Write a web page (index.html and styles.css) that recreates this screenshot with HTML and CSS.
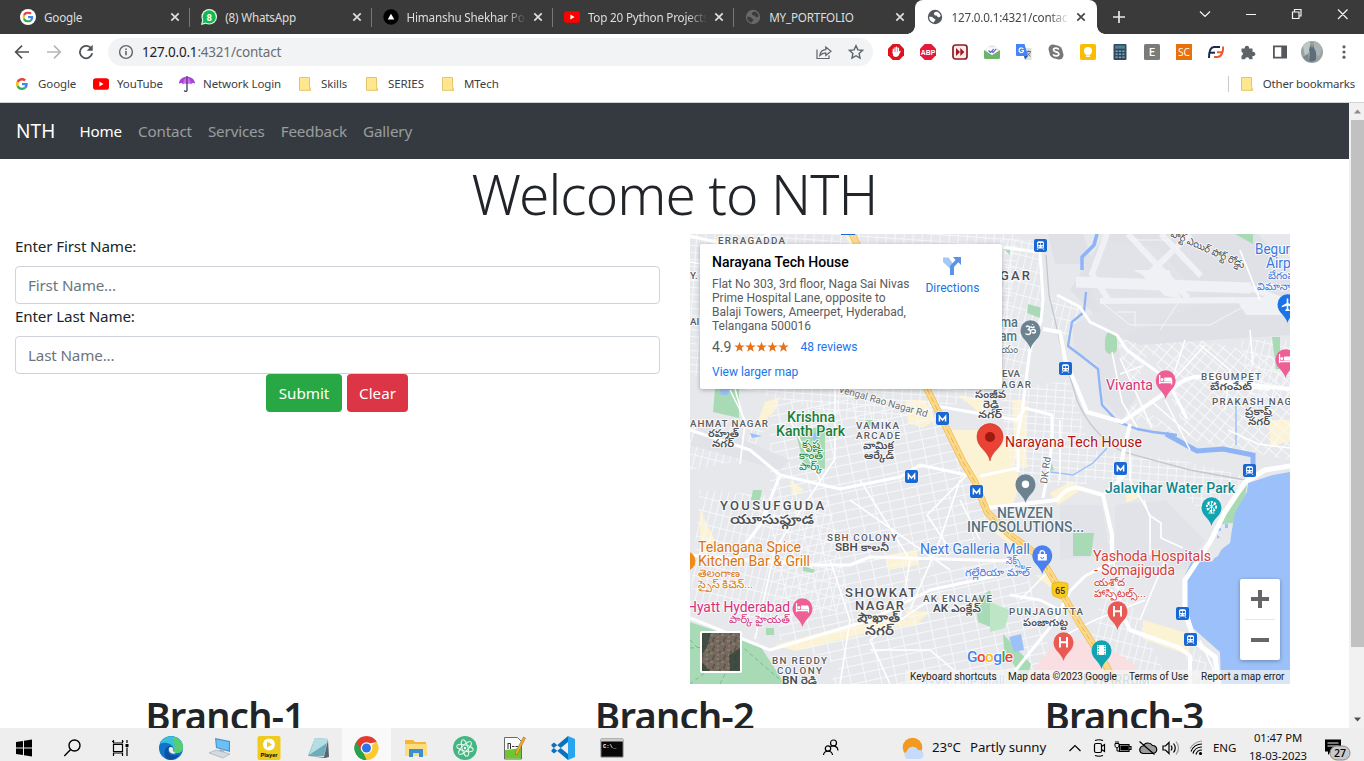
FILE: index.html
```html
<!DOCTYPE html>
<html lang="en">
<head>
<meta charset="utf-8">
<title>127.0.0.1:4321/contact</title>
<link rel="stylesheet" href="styles.css">
</head>
<body>
<svg class="defs" width="0" height="0">
  <defs>
    <symbol id="g-logo" viewBox="0 0 48 48">
      <path fill="#ea4335" d="M24 9.500c3.500 0 6.700 1.200 9.200 3.600l6.900-6.900C35.900 2.400 30.500 0 24 0 14.600 0 6.500 5.400 2.600 13.200l8 6.200C12.400 13.700 17.700 9.500 24 9.500z"/>
      <path fill="#4285f4" d="M47 24.500c0-1.600-.2-3.100-.4-4.500H24v9h12.900c-.6 3-2.200 5.500-4.800 7.200l7.700 6C44.400 38 47 31.800 47 24.500z"/>
      <path fill="#fbbc05" d="M10.500 28.600a14.500 14.500 0 0 1 0-9.200l-8-6.200a24 24 0 0 0 0 21.600z"/>
      <path fill="#34a853" d="M24 48c6.500 0 11.900-2.100 15.900-5.800l-7.700-6c-2.200 1.500-4.900 2.300-8.200 2.300-6.300 0-11.600-4.200-13.500-9.900l-8 6.200C6.500 42.600 14.600 48 24 48z"/>
    </symbol>
    <symbol id="yt" viewBox="0 0 16 16"><rect y="2.300" width="16" height="11.400" rx="2.800" fill="#f00"/><path d="M6.400 5.600v4.800l4.100-2.400z" fill="#fff"/></symbol>
    <symbol id="globe" viewBox="0 0 16 16"><circle cx="8" cy="8" r="7.200" fill="currentColor"/><path d="M2.200 7.800c2.200-.1 3.500.4 4.300 1.400.6.900 2 .4 2 1.600 0 1-1.300 1-1.600 2.600C3.800 13.200 2 10.500 2.200 7.800zM7 4.200c.7-1.300 2-1.700 3.200-1.500 2 .8 3.100 2.300 3.500 4.300-1 .7-1.500 1.700-2.700 1.200-.9-.5-.5-1.500-1.700-1.600C8 6.500 6.400 5.600 7 4.200z" fill="var(--cut)"/></symbol>
    <symbol id="x" viewBox="0 0 16 16"><path d="M4.300 4.300l7.400 7.400M11.700 4.300l-7.400 7.400" stroke="currentColor" stroke-width="1.700"/></symbol>
    <symbol id="folder" viewBox="0 0 16 16"><path d="M2.500 1.500h10v9l1.300 3.800H2.500z" fill="#ffe68f" stroke="#e5c468"/><path d="M11.500 14.300l1.500-4 1 4z" fill="#f3cf62"/></symbol>
    <symbol id="pin" viewBox="-11 -30 22 31"><path d="M0 0C-2-8-10-10-10-18.700A10 10 0 1 1 10-18.700C10-10 2-8 0 0z" fill="currentColor"/></symbol>
    <symbol id="bed" viewBox="0 0 14 14"><path d="M1 2v9M1 9.500h12v2M13 9.500V6.500" stroke="#fff" stroke-width="1.300" fill="none"/><path d="M5.500 4.500h6.500a1 1 0 0 1 1 1v3H5.500z" fill="#fff"/><circle cx="3.300" cy="6.500" r="1.500" fill="#fff"/></symbol>
    <symbol id="metro" viewBox="0 0 14 14"><rect width="14" height="14" rx="2.200" fill="#fff" opacity=".8"/><rect x=".5" y=".5" width="13" height="13" rx="2" fill="#1967d2"/><path d="M3.900 10V4.800L7 8.500l3.100-3.700V10" fill="none" stroke="#fff" stroke-width="1.500"/></symbol>
    <symbol id="train" viewBox="0 0 14 14"><rect x=".5" y=".5" width="13" height="13" rx="2" fill="#1967d2"/><rect x="3.600" y="2.700" width="6.800" height="7.300" rx="1.500" fill="#fff"/><path d="M4.700 4.500h2v2h-2zM7.400 4.500h2v2h-2z" fill="#1967d2"/><circle cx="5.300" cy="8.200" r=".7" fill="#1967d2"/><circle cx="8.700" cy="8.200" r=".7" fill="#1967d2"/><path d="M4.500 10l-1 1.400M9.500 10l1 1.400" stroke="#fff"/></symbol>
    <symbol id="star" viewBox="0 0 12 12"><path d="M6 .3l1.500 4h4.200L8.300 6.900l1.300 4.300L6 8.700l-3.600 2.500 1.300-4.300L.3 4.300h4.200z" fill="#e7711b"/></symbol>
  </defs>
</svg>

<header class="tabstrip">
  <div class="tab">
    <svg class="fav" viewBox="0 0 16 16"><circle cx="8" cy="8" r="8" fill="#fff"/><use href="#g-logo" x="2.500" y="2.500" width="11" height="11"/></svg>
    <span class="tab-title">Google</span><svg class="tab-x"><use href="#x"/></svg>
  </div>
  <div class="tab">
    <svg class="fav" viewBox="0 0 16 16"><circle cx="8.200" cy="7.800" r="7.800" fill="#e9f9ee"/><path d="M0 16l1.300-5 3.700 3.700z" fill="#e9f9ee"/><circle cx="8.200" cy="7.900" r="6.600" fill="#12b84a"/><path d="M1.500 14.500l1-3.500 2.500 2.500z" fill="#12b84a"/><text class="wa" x="8.200" y="11.500" text-anchor="middle">8</text></svg>
    <span class="tab-title">(8) WhatsApp</span><svg class="tab-x"><use href="#x"/></svg>
  </div>
  <div class="tab">
    <svg class="fav" viewBox="0 0 16 16"><circle cx="8" cy="8" r="7.700"/><path d="M8 4.800l3.300 5.600H4.700z" fill="#fff"/></svg>
    <span class="tab-title fade">Himanshu Shekhar Portfolio</span><svg class="tab-x"><use href="#x"/></svg>
  </div>
  <div class="tab">
    <svg class="fav"><use href="#yt"/></svg>
    <span class="tab-title fade">Top 20 Python Projects</span><svg class="tab-x"><use href="#x"/></svg>
  </div>
  <div class="tab last">
    <svg class="fav globe-dim"><use href="#globe"/></svg>
    <span class="tab-title">MY_PORTFOLIO</span><svg class="tab-x"><use href="#x"/></svg>
  </div>
  <div class="tab active">
    <svg class="fav globe-on"><use href="#globe"/></svg>
    <span class="tab-title fade">127.0.0.1:4321/contact</span><svg class="tab-x"><use href="#x"/></svg>
  </div>
  <svg class="plus" viewBox="0 0 14 14"><path d="M7 1v12M1 7h12" stroke="#e8e8e8" stroke-width="1.700"/></svg>
  <svg class="winctl" width="160" height="28" viewBox="0 0 160 28" fill="none" stroke="#f4f4f4" stroke-width="1.200">
    <path d="M1 11.500l5 5 5-5M47 14.500h10M93.500 12h6.500v6.500h-6.500zM95.500 12v-2.500h6.500v6.500h-2M139 9.500l9.500 9.500M148.500 9.500l-9.500 9.500"/>
  </svg>
</header>

<div class="toolbar">
  <div class="navbtns">
    <svg viewBox="0 0 16 16"><path d="M15 8H2M8 1.700L1.700 8 8 14.300" fill="none" stroke="#505357" stroke-width="1.700"/></svg>
    <svg viewBox="0 0 16 16"><path d="M1 8h13M8 1.700L14.300 8 8 14.300" fill="none" stroke="#b5b7ba" stroke-width="1.700"/></svg>
    <svg viewBox="0 0 16 16"><path d="M13.500 5A6.200 6.200 0 1 0 14.200 9.300" fill="none" stroke="#505357" stroke-width="1.800"/><path d="M14.700.8v6h-6z" fill="#505357"/></svg>
  </div>
  <div class="omnibox">
    <svg class="i16" viewBox="0 0 16 16"><circle cx="8" cy="8" r="6.400" fill="none" stroke="#5f6368" stroke-width="1.400"/><path d="M8 7v4.300M8 4.400v1.500" stroke="#5f6368" stroke-width="1.600"/></svg>
    <span class="url"><b>127.0.0.1</b>:4321/contact</span>
    <svg class="i16" viewBox="0 0 16 16" fill="none" stroke="#5f6368" stroke-width="1.200"><path d="M1 5.500v9h12v-3"/><path d="M3.800 11.500c.4-3.500 2.500-5.700 6-5.900V3l5.200 4.300-5.200 4.200V8.800c-2.500 0-4.300.8-6 2.700z"/></svg>
    <svg class="i16 star-btn" viewBox="0 0 16 16"><path d="M8 1.700l1.900 4.200 4.600.5-3.400 3.100.9 4.500-4-2.300L4 14l.9-4.500L1.500 6.400l4.600-.5z" fill="none" stroke="#5f6368" stroke-width="1.400"/></svg>
  </div>
  <div class="exts">
    <svg viewBox="0 0 16 16"><path d="M4.700 0h6.600L16 4.700v6.600L11.300 16H4.700L0 11.300V4.700z" fill="#dd1320"/><path d="M5.300 9V5.200M7 8V3.700M8.700 8V3.200M10.400 8V4.200" stroke="#fff" stroke-width="1.300" stroke-linecap="round"/><path d="M4.600 8h6.300l1-1.500.9.600-2.300 4.700c-.8 1.500-4.600 1.500-5.400 0z" fill="#fff"/></svg>
    <svg viewBox="0 0 16 16"><path d="M4.700 0h6.600L16 4.700v6.600L11.300 16H4.700L0 11.300V4.700z" fill="#e5193c"/><text class="abp" x="8" y="10.700" text-anchor="middle" textLength="14.500" lengthAdjust="spacingAndGlyphs">ABP</text></svg>
    <svg viewBox="0 0 16 16"><rect x="1" y="1" width="14" height="14" rx="2.500" fill="#fbeceb" stroke="#8e1c22" stroke-width="1.700"/><path d="M4 4l4 4-4 4zM8.300 4l4 4-4 4z" fill="#a01820"/></svg>
    <svg viewBox="0 0 16 16"><path d="M0 6l8 5 8-5v7.500a1.500 1.500 0 0 1-1.500 1.500h-13A1.500 1.500 0 0 1 0 13.500z" fill="#6db36b"/><path d="M.5 6L5 2l3-1 3 1 4.500 4-7.500 4.500z" fill="#dcefdd"/><path d="M3 3.500h10v4L8 10.500l-5-3z" fill="#fff"/><path d="M4.500 6.500l2 2 3.300-3.700M8 7.500l1 1 3.300-3.700" fill="none" stroke="#5955c4" stroke-width="1.100"/></svg>
    <svg viewBox="0 0 16 16"><path d="M7 4h8.500v12H9z" fill="#dfe2e5"/><path d="M0 0h8.500l3.500 12H1a1 1 0 0 1-1-1z" fill="#4285f4"/><path d="M8 12h4l-3 3.500z" fill="#1e55b4"/><path d="M7.300 5A2.300 2.300 0 1 0 7.300 7.500V6.500H5.500" stroke="#fff" fill="none" stroke-width="1.200"/><path d="M10.500 7.500h4.500M12.500 6.500v1M14.500 7.500c-.5 2-1.500 3-3 4M11.500 8.500c.5 1.500 1.500 3 3 3.800" stroke="#687076" fill="none"/></svg>
    <svg viewBox="0 0 16 16"><circle cx="5" cy="5" r="4.500" fill="#777"/><circle cx="11" cy="11" r="4.500" fill="#777"/><circle cx="8" cy="8" r="6.700" fill="#777"/><path d="M10.800 5.500C9.500 3.600 5.500 3.800 5.500 6c0 2.400 5.300 1.400 5.300 4 0 2.400-4.500 2.600-5.700.4" fill="none" stroke="#fff" stroke-width="1.700"/></svg>
    <svg viewBox="0 0 16 16"><rect width="16" height="16" rx="1.800" fill="#fbbc04"/><circle cx="8" cy="7" r="4" fill="#fff"/><path d="M6 9.500h4v3.500H6z" fill="#fff"/><path d="M6 11.300h4" stroke="#fbbc04" stroke-width=".6"/></svg>
    <svg viewBox="0 0 16 16"><rect x="1.500" y="0" width="13" height="16" rx="1" fill="#34495e"/><rect x="3" y="1.500" width="10" height="3.200" fill="#4b7f92"/><path d="M3.500 7.200h9M3.500 10.200h9M3.500 13.200h9" stroke="#7ba6c2" stroke-width="1.500" stroke-dasharray="2.200 1.200"/></svg>
    <svg viewBox="0 0 16 16"><rect width="16" height="16" rx="1.500" fill="#7b7b7b"/><text class="e" x="8" y="11.800" text-anchor="middle">E</text></svg>
    <svg viewBox="0 0 16 16"><rect width="16" height="16" fill="#e8710a"/><text class="sc" x="8" y="12" text-anchor="middle" textLength="12" lengthAdjust="spacingAndGlyphs">SC</text></svg>
    <svg viewBox="0 0 16 16" fill="none" stroke-width="2"><path d="M1 14c0-7 1.500-11 5-11h6" stroke="#192b4d"/><path d="M2 8.700h5" stroke="#192b4d"/><path d="M9 8.200h5.500M15 2.500c.5 6-2 10.500-5.500 10.500H6" stroke="#ef5a2a"/></svg>
    <svg viewBox="0 0 16 16"><path d="M1.500 4.500h3.300a2.200 2.200 0 1 1 4.200 0h3.500v3.300a2.200 2.200 0 1 1 0 4.200v3.300H9.300a2.100 2.100 0 0 0-4.200 0H1.500v-3.600a2.100 2.100 0 0 0 0-4z" fill="#5f6368"/></svg>
    <svg viewBox="0 0 16 16"><path d="M1 1.500h14v13H1zM2.800 3.300v9.400h6.500V3.300z" fill="#54575b" fill-rule="evenodd"/></svg>
    <svg class="avatar" viewBox="0 0 22 22"><circle cx="11" cy="11" r="11" fill="#98a2a2"/><path d="M2 5a11 11 0 0 1 7-5v10l-5 5z" fill="#bec8c5"/><path d="M13 0a11 11 0 0 1 8 8l-3 8-5-5z" fill="#a9b4b6"/><path d="M9 5c2-2 4-1 4 2l2 4v8c-3 2-6 2-7 1l1-8-1-3z" fill="#5f6d7a"/><path d="M2 16l5-3 1 8a11 11 0 0 1-6-5z" fill="#7b8788"/><circle cx="11" cy="5" r="1.600" fill="#9d8c86"/></svg>
    <svg viewBox="0 0 16 16"><circle cx="8" cy="2.800" r="1.600" fill="#5f6368"/><circle cx="8" cy="8" r="1.600" fill="#5f6368"/><circle cx="8" cy="13.200" r="1.600" fill="#5f6368"/></svg>
  </div>
</div>

<div class="bookmarks">
  <div class="bm b1"><svg class="i16" viewBox="0 0 16 16"><use href="#g-logo" x="2" y="2" width="12" height="12"/></svg><span>Google</span></div>
  <div class="bm b2"><svg class="i16"><use href="#yt"/></svg><span>YouTube</span></div>
  <div class="bm b3"><svg class="i16" viewBox="0 0 16 16"><path d="M0 7.800C0 3 4 .8 8 .8s8 2.200 8 7c-1-1.300-3-1.300-4 .5-1.500-1.300-2.500-1.300-4 0-1.500-1.300-2.500-1.300-4 0-1-1.800-3-1.800-4-.5z" fill="#a844d6"/><path d="M4 8.300C4.300 4 6 2 8 1c2 1 3.700 3 4 7.300-1.500-1.300-2.500-1.300-4 0-1.500-1.300-2.500-1.300-4 0z" fill="#d06af0"/><path d="M8 0v14c0 2-2.500 2-2.500.2" fill="none" stroke="#57456c" stroke-width="1.400"/></svg><span>Network Login</span></div>
  <div class="bm b4"><svg class="i16"><use href="#folder"/></svg><span>Skills</span></div>
  <div class="bm b5"><svg class="i16"><use href="#folder"/></svg><span>SERIES</span></div>
  <div class="bm b6"><svg class="i16"><use href="#folder"/></svg><span>MTech</span></div>
  <div class="bm other"><svg class="i16"><use href="#folder"/></svg><span>Other bookmarks</span></div>
</div>

<div class="viewport">
  <main class="page">
    <nav class="navbar">
      <a class="brand">NTH</a>
      <a class="on">Home</a><a>Contact</a><a>Services</a><a>Feedback</a><a>Gallery</a>
    </nav>
    <h1 class="welcome"><span>Welcome to NTH</span></h1>
    <div class="row">
      <form class="col">
        <label>Enter First Name:</label>
        <div class="control">First Name...</div>
        <label>Enter Last Name:</label>
        <div class="control">Last Name...</div>
        <div class="actions"><button class="btn ok" type="button">Submit</button><button class="btn no" type="button">Clear</button></div>
      </form>
      <div class="map">
        <svg class="canvas" width="600" height="450" viewBox="690 234 600 450">
          <defs>
            <pattern id="ga" width="9" height="7" patternUnits="userSpaceOnUse" patternTransform="rotate(4)"><path d="M0 .5h9M.5 0v7" stroke="#f7f8fa" stroke-width=".9"/></pattern>
            <pattern id="gb" width="7" height="13" patternUnits="userSpaceOnUse" patternTransform="rotate(14)"><path d="M0 .5h7M.5 0v13" stroke="#f7f8fa" stroke-width=".9"/></pattern>
            <pattern id="gc" width="15" height="9" patternUnits="userSpaceOnUse" patternTransform="rotate(-12)"><path d="M0 .5h15M.5 0v9" stroke="#f7f8fa" stroke-width="1"/></pattern>
            <pattern id="gd" width="10" height="8" patternUnits="userSpaceOnUse" patternTransform="rotate(40)"><path d="M0 .5h10M.5 0v8" stroke="#f7f8fa" stroke-width="1"/></pattern>
            <pattern id="sat" width="11" height="9" patternUnits="userSpaceOnUse"><path d="M1 1h3v2H1zM6 4h3v2H6zM2 6h2v2H2z" fill="#8f8378"/><path d="M4 3h2v2H4zM8 0h2v3H8zM9 7h2v2H9z" fill="#54503f"/></pattern>
          </defs>
          <path fill="#e6e8ec" d="M690 234h600v450H690z"/>
          <!-- commercial blocks -->
          <g fill="#fcf2d4"><path d="M765 402l15-5-5 14-20 18zM845 235l8 0 14 20-15-2zM905 400h20l10 20-12 8-15-5zM958 395l28 5v20l-12-12zM950 430h30l38 20-5 18-45 8-12-20zM968 476l50-8v20l-5 18-30 3zM1012 400l14 0 1 68h-9l-4-30zM1270 420h20v20l-20 8zM790 480l14 10-12 6zM885 555l32-5 2 15-30 5zM775 645l110-30 40 8-50 8-80 20zM700 510l15 30-15 25zM1143 620l50 15-5 20-45-16zM1050 493l22-12 10 8-24 16zM1125 490l18-2-5 10-12 5zM905 610l25 2-18 15zM1035 575l15 0 12 16-12-4zM1000 520l35 32-10 3-30-22z"/></g>
          <!-- street grids -->
          <path fill="url(#ga)" d="M690 234h330l-20 160-130 30-180-50z"/>
          <path fill="url(#gb)" d="M690 420l75 10-20 30-55 10zM700 490l130 10 20 110-90 10-70-20z"/>
          <path fill="url(#gc)" d="M770 400h170l50 130-80 50-60 90-70-30-10-100zM880 590l140-40 40 134H830z"/>
          <path fill="url(#gd)" d="M1120 340h80l90 20v100l-100-20-80-30zM1130 400l60 40-40-90z"/>
          <path fill="url(#ga)" d="M1000 390l70-10 20 70 90 10 80 20-60 30-20-20-70-4-10-8-30 12-60-20z"/>
          <path fill="url(#gb)" d="M1000 240h40v90l-20 60-20-10zM1050 297l30 10-8 30-20-4zM1110 560l60 124h-90zM1190 640l30 44h-40zM1240 340h50v60h-40z"/>
          <!-- campus and airport ground -->
          <path fill="#dfe1e6" d="M1048 234h35l10 30h-38zM1105 234h153l32 36v65l-80 5-70 5-25-10-45-45z"/>
          <path fill="#e1e3e8" d="M1092 262l15-20 50 5 50 55-90 35-25-40zM1072 325l30-15 10 25 25 60-15 25-20-20-4-35-24-15zM700 420l90 40-10 10-90-25zM1115 505l50-5 40 40-20 30-70-5zM1060 505l42 0 8 50-50 5z"/>
          <path fill="none" stroke="#f0f1f4" stroke-width="11" d="M1076 282l175 6"/>
          <path fill="none" stroke="#f0f1f4" stroke-width="6" d="M1100 301l190-1M1128 234l60 64M1161 234l40 42M1250 288l40 15M1107 234l-15 40 18 28M1190 234l-45 44"/>
          <path fill="#f0f1f4" d="M1238 302h52v13h-44zM1133 270h36l12 28-16-2-20-20z"/>
          <path fill="none" stroke="#f4f5f7" stroke-width="1" d="M1100 301l30 24h80l40-22M1117 312h18v14M1180 300l-20 30M1130 240h40l30 34"/>
          <path d="M1030 675l30-40 45 10 30 20 10 19H1030z" fill="#fadfe2"/>
          <!-- parks -->
          <g fill="#a8dab5"><path d="M715 389h24v29l-26-6zM795 430l30-3v42h-20zM1028 304l14 4-2 10-13-5zM1105 341a6 10 0 0 1 12 0v8a6 6 0 0 1-12-2zM1235 234h18v10zM1272 337h8v32h-4zM1073 533h21l-3 23h-18zM690 622l70 24 25 38h-95zM975 600l15-10 8 40-20-8zM803 566l12 4-2 3-10-2zM753 490l9 0-2 10-9 0zM766 628l8 0 0 7-8 0zM1235 500l12-15-3 20-15 35-10-14zM1003 634l28 30-5 20-22-35zM865 420l8 0-3 7zM1051 462l3 8-4 1zM1002 247h8v8z"/></g>
          <path fill="#bde6c6" d="M990 602l20 8-5 18-15 4z"/>
          <path d="M690 648l50-3 45 39M690 640l25 25-25 19M720 684l18-38" fill="none" stroke="#6fb184" stroke-width=".8" stroke-dasharray="4 3"/>
          <!-- water -->
          <path fill="#9cc0f9" d="M1290 472l-17 3-25 8-1 9-12 21-3 17-14 26-10 6-15-4-8 17v27l8 26 10 9 17 15 1 32h69z"/>
          <path fill="#e6e8ec" d="M1213 525l20-2-3 20-12 9-6 10-10-9z"/>
          <path fill="#9cc0f9" d="M720 389h10l-2 6h-7zM1218 528h3v3h-3zM1225 524h3v4h-3zM1217 535l3 2-3 2zM1009 637l12-3 3 16-10 2zM808 434l12-2-3 10zM750 433l12 3-10 2z"/>
          <path d="M1097 234l-3 11-12 12v13" fill="none" stroke="#8fb4f5" stroke-width="3.500"/>
          <path d="M1086 292l-2 20-12 10-4 24 12 9 18 14 2 20 2 16 16 17 19 7 16 3 24 3" fill="none" stroke="#8fb4f5" stroke-width="2.300" stroke-linejoin="round"/>
          <path d="M1166 434l31 17 26-2 30 6v15" fill="none" stroke="#8fb4f5" stroke-width="5"/>
          <path d="M1236 400v45M1107 448l-14 15-20 12-23-3" fill="none" stroke="#9cc0f9" stroke-width="1.400"/>
          <!-- railway -->
          <path d="M1046 255l3 40 13 55 15 50q14 34 46 52l67 18 55 10" fill="none" stroke="#c4c7cc" stroke-width="1.300"/>
          <!-- local roads -->
          <g fill="none" stroke="#fff" stroke-width="1.600">
            <path d="M690 262l60 10M745 420l-15-30M735 389l10 35-5 40M835 389v70l-60 90-20 90M790 420l30 60M960 480l-20 60-30 70M860 480l50 80-10 60M850 500l100 70M830 560l20 60-10 64M1112 352l10 50 15 25M1120 358l32 70M1142 366l-22 8M1185 340l-18 55M1200 345l30 25-5 40M1165 400l25 50M1150 400l40 35M1205 345l-45 50M1060 420v60M1130 440v40l20 35v40M1144 500l5 15 12 8v15l22 10M1020 600l30-30M930 600l-60 40 20 44M870 650h60l40 34M1055 640l40-20 50-20M1120 600l-10-60M1165 560l-25 60M1200 640l20 44M1270 390l-45-5M1250 330l3 35M1228 430l30 14 32 4M1024 440h30M967 475l-40 40 20 30M960 500l20 40M1240 250l20 50"/>
          </g>
          <!-- main roads -->
          <g fill="none" stroke="#fff" stroke-width="3" stroke-linejoin="round">
            <path d="M690 236l50 12 30-14M1000 247l38 5M1040 252l3 47-2 22-11 28-8 63-4 23v37" />
            <path d="M1043 329l17 3 5 27 22 53 35 10 55-37q13-10 26-8l20 5 67 7M1130 424l-7 30-5 30" stroke-width="4"/>
            <path d="M1057 295l23 12 10 15 27 13 10 15 40 29 20 40M930 405l87 15 8-12 27 7v22l-2 25-7 36"/>
            <path d="M987 508l70-8q10-14 22-12l24 7 9 40v20" stroke-width="4"/>
            <path d="M690 430l60 20 30 25 60 14 60-12 20-12 47 10M980 476l38-8M1103 495l22-20"/>
            <path d="M780 475l-20 50-30 40M690 555l120 10 40 0 20-8 143 4"/>
            <path d="M690 618l80 32 100-30 60-30 70-15"/>
            <path d="M1125 556l-40 20-15 15-15 30-40 50M1010 595l30 5 20 10" />
            <path d="M1110 590l20 40 50 18 10 8v28" stroke-width="4"/>
          </g>
          <path d="M1290 466l-25 4-20 12-20 30-15 30-25 38v32l10 30 20 15 4 27" fill="none" stroke="#fff" stroke-width="5"/>
          <!-- highway -->
          <path d="M852 234l20 40 55 115 15 30 21 43 12 20 12 30 23 23 30 22 20 33 20 34 23 36 14 26" fill="none" stroke="#f2bb4c" stroke-width="7"/>
          <path d="M852 234l20 40 55 115 15 30 21 43 12 20 12 30 23 23 30 22 20 33 20 34 23 36 14 26" fill="none" stroke="#fbd98c" stroke-width="5.500"/>
          <path d="M927 389l15 30 21 43 12 20 12 30 23 23 30 22 20 33 20 34 23 36" fill="none" stroke="#eea92e" stroke-width=".8" stroke-dasharray="6 3"/>

          <g class="lbl poi blue under"><text x="925" y="686" textLength="80" lengthAdjust="spacingAndGlyphs">GVK One Mall</text></g>
          <text class="lbl poi teal under" x="1083" y="685" textLength="67" lengthAdjust="spacingAndGlyphs">PVR IRRUM</text>

          <g class="lbl area">
            <text x="718" y="244" textLength="67">ERRAGADDA</text>
            <text x="690" y="427" textLength="78">AHMAT NAGAR</text>
            <text x="856" y="429" textLength="43">VAMIKA</text><text x="856" y="439" textLength="44">ARCADE</text>
            <text x="827" y="541" textLength="70">SBH COLONY</text>
            <text x="923" y="602" textLength="69">AK ENCLAVE</text>
            <text x="1009" y="615" textLength="74">PUNJAGUTTA</text>
            <text x="1201" y="380" textLength="60">BEGUMPET</text>
            <text x="1212" y="405" textLength="87">PRAKASH NAGA</text>
            <text x="772" y="664" textLength="55">BN REDDY</text><text x="777" y="674" textLength="45">COLONY</text>
            <text x="1002" y="377" textLength="18">EVA</text><text x="1001" y="388" textLength="30">AGAR</text>
            <text x="690" y="279">Y.</text><text x="690" y="325">AI</text>
          </g>
          <g class="lbl te">
            <text x="708" y="437" textLength="31" lengthAdjust="spacingAndGlyphs">రహ్మత్</text><text x="712" y="447" textLength="22" lengthAdjust="spacingAndGlyphs">నగర్</text>
            <text x="863" y="449" textLength="31" lengthAdjust="spacingAndGlyphs">వామిక</text><text x="864" y="459" textLength="30" lengthAdjust="spacingAndGlyphs">ఆర్కేడ్</text>
            <text x="835" y="551" textLength="54" lengthAdjust="spacingAndGlyphs">SBH కాలనీ</text>
            <text x="933" y="612" textLength="48" lengthAdjust="spacingAndGlyphs">AK ఎంక్లేవ్</text>
            <text x="1023" y="626" textLength="45" lengthAdjust="spacingAndGlyphs">పంజాగుట్ట</text>
            <text x="1210" y="390" textLength="42" lengthAdjust="spacingAndGlyphs">బేగంపేట్</text>
            <text x="1245" y="415" textLength="27" lengthAdjust="spacingAndGlyphs">ప్రకాష్</text><text x="1248" y="425" textLength="22" lengthAdjust="spacingAndGlyphs">నగర్</text>
            <text x="782" y="684" textLength="35" lengthAdjust="spacingAndGlyphs">BN రెడ్డి</text>
            <text x="975" y="398" textLength="31" lengthAdjust="spacingAndGlyphs">సంజీవ</text><text x="983" y="408" textLength="16" lengthAdjust="spacingAndGlyphs">రెడ్డి</text><text x="978" y="418" textLength="24" lengthAdjust="spacingAndGlyphs">నగర్</text>
          </g>
          <g class="lbl town">
            <text x="720" y="510" textLength="104">YOUSUFGUDA</text>
            <text x="845" y="597" textLength="71">SHOWKAT</text><text x="855" y="610" textLength="49">NAGAR</text>
            <text x="1000" y="280" textLength="30">GAR</text>
            <text class="tt" x="730" y="524" textLength="84" lengthAdjust="spacingAndGlyphs">యూసుఫ్గూడ</text>
            <text class="tt" x="857" y="622" textLength="43" lengthAdjust="spacingAndGlyphs">షౌఖాత్</text><text class="tt" x="865" y="635" textLength="29" lengthAdjust="spacingAndGlyphs">నగర్</text>
          </g>
          <g class="lbl road">
            <text transform="translate(838 392) rotate(16)" textLength="92" lengthAdjust="spacingAndGlyphs">Vengal Rao Nagar Rd</text>
            <text transform="translate(1047 484) rotate(-82)" textLength="27" lengthAdjust="spacingAndGlyphs">DK Rd</text>
            <text class="dark" transform="translate(1170 236) rotate(24)" textLength="80" lengthAdjust="spacingAndGlyphs">పోర్ట్ ఎయిర్ పోర్ట్ రోడ్డు</text>
          </g>
          <g class="lbl poi green"><text x="787" y="422" textLength="48" lengthAdjust="spacingAndGlyphs">Krishna</text><text x="776" y="436" textLength="69" lengthAdjust="spacingAndGlyphs">Kanth Park</text>
            <g class="small"><text x="802" y="448" textLength="18" lengthAdjust="spacingAndGlyphs">కృష్ణ</text><text x="799" y="459" textLength="24" lengthAdjust="spacingAndGlyphs">కాంత్</text><text x="799" y="470" textLength="23" lengthAdjust="spacingAndGlyphs">పార్క్</text></g></g>
          <g class="lbl poi orange"><text x="698" y="552" textLength="103" lengthAdjust="spacingAndGlyphs">Telangana Spice</text><text x="698" y="566" textLength="112" lengthAdjust="spacingAndGlyphs">Kitchen Bar &amp; Grill</text>
            <g class="small"><text x="698" y="577" textLength="42" lengthAdjust="spacingAndGlyphs">తెలంగాణ</text><text x="698" y="588" textLength="55" lengthAdjust="spacingAndGlyphs">స్పైస్ కిచెన్...</text></g></g>
          <g class="lbl poi pink"><text x="687" y="612" textLength="103" lengthAdjust="spacingAndGlyphs">Hyatt Hyderabad</text><text class="small" x="729" y="623" textLength="61" lengthAdjust="spacingAndGlyphs">పార్క్ హైయత్</text><text x="1106" y="390" textLength="47" lengthAdjust="spacingAndGlyphs">Vivanta</text></g>
          <g class="lbl poi blue"><text x="920" y="554" textLength="110" lengthAdjust="spacingAndGlyphs">Next Galleria Mall</text>
            <g class="small"><text x="1006" y="564" textLength="19" lengthAdjust="spacingAndGlyphs">నెక్స్ట్</text><text x="965" y="576" textLength="65" lengthAdjust="spacingAndGlyphs">గల్లేరియా మాల్</text><text x="1268" y="279" textLength="27" lengthAdjust="spacingAndGlyphs">బేగంప</text><text x="1257" y="290" textLength="40" lengthAdjust="spacingAndGlyphs">విమానాశ్ర</text></g>
            <text x="1255" y="254" textLength="50" lengthAdjust="spacingAndGlyphs">Begump</text><text x="1266" y="268" textLength="42" lengthAdjust="spacingAndGlyphs">Airport</text></g>
          <g class="lbl poi slate"><text x="997" y="518" textLength="56" lengthAdjust="spacingAndGlyphs">NEWZEN</text><text x="967" y="532" textLength="117" lengthAdjust="spacingAndGlyphs">INFOSOLUTIONS...</text><text x="1000" y="327" textLength="18" lengthAdjust="spacingAndGlyphs">ma</text><text x="1000" y="341" textLength="17" lengthAdjust="spacingAndGlyphs">am</text><text class="small" x="1001" y="353" textLength="17" lengthAdjust="spacingAndGlyphs">యం</text></g>
          <g class="lbl poi teal"><text x="1105" y="493" textLength="130" lengthAdjust="spacingAndGlyphs">Jalavihar Water Park</text></g>
          <g class="lbl poi red"><text x="1093" y="561" textLength="118" lengthAdjust="spacingAndGlyphs">Yashoda Hospitals</text><text x="1094" y="575" textLength="81" lengthAdjust="spacingAndGlyphs">- Somajiguda</text>
            <g class="small"><text x="1094" y="586" textLength="31" lengthAdjust="spacingAndGlyphs">యశోద</text><text x="1094" y="597" textLength="52" lengthAdjust="spacingAndGlyphs">హాస్పిటల్స్...</text></g></g>
          <g class="lbl poi dark-red"><text x="1005" y="447" textLength="137" lengthAdjust="spacingAndGlyphs">Narayana Tech House</text></g>

          <g>
            <use href="#metro" x="935.500" y="411.500" width="14" height="14"/><use href="#metro" x="904.500" y="469.500" width="14" height="14"/><use href="#metro" x="969.500" y="484.500" width="14" height="14"/><use href="#metro" x="1113.500" y="461.500" width="14" height="14"/>
            <use href="#train" x="1033.500" y="238.500" width="14" height="14"/><use href="#train" x="1058.500" y="361.500" width="14" height="14"/><use href="#train" x="1242.500" y="463.500" width="14" height="14"/><use href="#train" x="1175.500" y="606.500" width="14" height="14"/><use href="#train" x="1183.500" y="632.500" width="14" height="14"/>
            <path d="M841 234h14v1h-14z" fill="#1967d2"/>
            <path d="M1053 583l7-1 7 1q1.500 0 1 6 0 6-1.500 7l-6.500 2.500-6.500-2.500q-1.500-1-1.500-7-.5-6 1-6z" fill="#f9cb1c" stroke="#dba90a" stroke-width=".6"/><text class="hwno" x="1060" y="593.500" text-anchor="middle">65</text>
          </g>
          <circle cx="686" cy="561" r="9.500" fill="#ee8b1b"/>
          <g transform="translate(1165.700 399)" color="#ee6095"><use href="#pin" x="-11" y="-30" width="22" height="31"/><use href="#bed" x="-7" y="-26" width="14" height="14"/></g>
          <g transform="translate(1285.500 378)" color="#ee6095"><use href="#pin" x="-11" y="-30" width="22" height="31"/><use href="#bed" x="-7" y="-26" width="14" height="14"/></g>
          <g transform="translate(802.500 627)" color="#ee6095"><use href="#pin" x="-11" y="-30" width="22" height="31"/><use href="#bed" x="-7" y="-26" width="14" height="14"/></g>
          <g transform="translate(1287.500 323)" color="#1a73e8"><use href="#pin" x="-11" y="-30" width="22" height="31"/><path d="M-.8-24.500h1.600v4.500l5 3v1.300l-5-1.500v3l1.400 1.200v1h-4.400v-1l1.400-1.200v-3l-5 1.500V-17l5-3z" fill="#fff"/></g>
          <g transform="translate(1030.500 349)" color="#6b8390"><use href="#pin" x="-11" y="-30" width="22" height="31"/><path d="M-4.500-22c2-2 5 0 2.500 2.500 3 .5 3 5-.5 5-2 0-2.500-1-2.500-1M0-18.500c3-2 5-1 5 1s-3 2-3 .5M0-22.500c1 1.500 3 1.500 4 0M2-24.700v.8" fill="none" stroke="#fff" stroke-width="1.400"/></g>
          <g transform="translate(1025.500 503)" color="#6b8390"><use href="#pin" x="-11" y="-30" width="22" height="31"/><circle cy="-18.700" r="3.700" fill="#fff"/></g>
          <g transform="translate(1042.300 574)" color="#4a80f0"><use href="#pin" x="-11" y="-30" width="22" height="31"/><path d="M-4.500-20h9v6.500h-9z" fill="#fff"/><path d="M-2.300-20v-1a2.300 2.300 0 0 1 4.600 0v1" fill="none" stroke="#fff" stroke-width="1.300"/><path d="M-1.500-17a1.500 1.500 0 0 0 3 0" fill="none" stroke="#4a80f0"/></g>
          <g transform="translate(1211.500 526)" color="#12a4b0"><use href="#pin" x="-11" y="-30" width="22" height="31"/><circle cy="-19.500" r="4.600" fill="none" stroke="#fff" stroke-width="2" stroke-dasharray="2.200 1.200"/><path d="M0-20v7M0-20l-4-2M0-20l4-2M0-20v-4M0-20l-3 3.500M0-20l3 3.500M-3-13h6" stroke="#fff"/></g>
          <g transform="translate(1117.500 630)" color="#ea5a55"><use href="#pin" x="-11" y="-30" width="22" height="31"/><path d="M-3.500-24v10.500M3.500-24v10.500M-3.500-18.700h7" stroke="#fff" stroke-width="1.900"/></g>
          <g transform="translate(1063.500 661)" color="#ea5a55"><use href="#pin" x="-11" y="-30" width="22" height="31"/><path d="M-3.500-24v10.500M3.500-24v10.500M-3.500-18.700h7" stroke="#fff" stroke-width="1.900"/></g>
          <g transform="translate(1101.500 669)" color="#12a4b0"><use href="#pin" x="-11" y="-30" width="22" height="31"/><path d="M-4.500-24h9v10h-9z" fill="#fff"/><path d="M-3.300-23.500v9.500M3.300-23.500v9.500" stroke="#12a4b0" stroke-width="1.200" stroke-dasharray="1.400 1.200"/></g>
          <g transform="translate(990 461)"><path d="M0 0C-2-11-13-13-13-24.500A13 13 0 1 1 13-24.500C13-13 2-11 0 0z" fill="#ea4335" stroke="#c5372b" stroke-width=".6"/><circle cy="-24" r="5" fill="#9c1a12"/></g>

          <rect x="700" y="631" width="42" height="42" rx="2" fill="#fff"/><path d="M702 633h38v38h-38z" fill="#75695f"/><path d="M702 633h38v38h-38z" fill="url(#sat)" opacity=".7"/><path d="M702 633h9l-4 14-5 8zM729 655l11-7v23h-10zM702 662l8 9h-8z" fill="#33443a" opacity=".8"/>
          <text class="glogo" x="967" y="662" textLength="46"><tspan fill="#4285f4">G</tspan><tspan fill="#ea4335">o</tspan><tspan fill="#fbbc05">o</tspan><tspan fill="#4285f4">g</tspan><tspan fill="#34a853">l</tspan><tspan fill="#ea4335">e</tspan></text>
        </svg>
        <section class="card">
          <div class="card-main">
            <h2>Narayana Tech House</h2>
            <p>Flat No 303, 3rd floor, Naga Sai Nivas<br>Prime Hospital Lane, opposite to<br>Balaji Towers, Ameerpet, Hyderabad,<br>Telangana 500016</p>
            <div class="rating"><span>4.9</span><svg width="55" height="12"><use href="#star" width="11" height="12"/><use href="#star" x="11" width="11" height="12"/><use href="#star" x="22" width="11" height="12"/><use href="#star" x="33" width="11" height="12"/><use href="#star" x="44" width="11" height="12"/></svg><a>48 reviews</a></div>
            <a class="larger">View larger map</a>
          </div>
          <div class="dir">
            <svg width="22" height="22" viewBox="0 0 22 22"><path d="M2 3.500l3 .5 6.500 8.500V20H9v-6.500L2.500 7z" fill="#a6c8f5"/><path d="M2 2.500h5.500L12 8.700 8.500 13 2 7z" fill="#a6c8f5"/><path d="M12 2h8v8l-2.700-2.700L13 12v8H9v-9l5.500-6z" fill="#5a94ea"/></svg>
            <a>Directions</a>
          </div>
        </section>
        <div class="zoomctl"><svg width="40" height="81" viewBox="0 0 40 81"><path d="M11 20h18M20 11v18M11 61h18" stroke="#666" stroke-width="4"/><path d="M5 40.500h30" stroke="#e6e6e6"/></svg></div>
        <div class="attrib"><span class="a1">Keyboard shortcuts</span><span class="a2">Map data ©2023 Google</span><span class="a3">Terms of Use</span><span class="a4">Report a map error</span></div>
      </div>
    </div>
    <div class="branches"><h2>Branch-1</h2><h2>Branch-2</h2><h2>Branch-3</h2></div>
  </main>
  <div class="scrollbar">
    <svg width="15" height="17" viewBox="0 0 15 17"><path d="M5 10.500h7l-3.500-4z" fill="#8a8a8a"/></svg>
    <div class="thumb"></div>
    <svg width="15" height="17" viewBox="0 0 15 17"><path d="M5 6.500h7l-3.500 4z" fill="#505050"/></svg>
  </div>
</div>

<footer class="taskbar">
  <div class="sys">
    <svg viewBox="0 0 24 24"><path d="M4 6l7-1v6.500H4zM12 4.800l8-1.300v8h-8zM4 12.500h7V19l-7-1zM12 12.500h8v8l-8-1.300z"/></svg>
    <svg viewBox="0 0 24 24"><circle cx="14.500" cy="9.500" r="5.500" fill="none" stroke="#000" stroke-width="1.400"/><path d="M10.600 13.500L4.300 20" stroke="#000" stroke-width="1.400"/></svg>
    <svg viewBox="0 0 24 24" fill="none" stroke="#000" stroke-width="1.200"><path d="M5.500 8.500h9v7h-9zM4 5.500h2M14 5.500h1.500M5.500 4v3h9V4M5.500 20v-3h9v3M19 4v3M19 11.500V20"/><path d="M17.500 8h3v3h-3z" fill="#000" stroke="none"/></svg>
  </div>
  <div class="apps">
    <svg viewBox="0 0 24 24"><circle cx="12" cy="12" r="12" fill="#1274c9"/><path d="M1 8C4 1 11-1 17 1c5 2 7 6 7 10 0 4-3 6-6 6s-4-1-3.500-3C15 8 6 5 1 8z" fill="#39c1d7"/><path d="M14 1c7 1 10 6 10 10 0 4-3 6-6 6-3-.2-4-1-3.500-3 3-3 0-9-1-13z" fill="#56cd70"/><path d="M9 14c0 5 6 7 12 4-3 5-8 7-13 5-4-4-3-11 2-13 3 0 4 1 4 2-1-2-5-1-5 2z" fill="#104f9a"/><path d="M10 12c1-2 4-1 4 .5 0 1.500-1 3 3 4.500-4 2-8-1-7-5z" fill="#eee"/></svg>
    <svg viewBox="0 0 24 24"><path d="M7 2l15 3v11L8 12z" fill="#4a93c8"/><path d="M8.300 3.500l12.500 2.600v8.400L9 11.300z" fill="#6cc0f7"/><path d="M1 17l7-3 14 4-7 4z" fill="#d3dae0" stroke="#9ba6ae" stroke-width=".6"/><path d="M12 13l5 1-1 2-5-1z" fill="#a9b4bb"/></svg>
    <svg viewBox="0 0 24 24"><rect x=".5" width="23" height="24" rx="2" fill="#eecb1c"/><circle cx="12" cy="8.500" r="6" fill="#fff"/><path d="M10 5.500v6l5-3z" fill="#eecb1c"/><text class="pl" x="12" y="21" text-anchor="middle" textLength="17" lengthAdjust="spacingAndGlyphs">Player</text></svg>
    <svg viewBox="0 0 24 24"><path d="M9 2l13 1-4 17H2z" fill="#6cadbd"/><path d="M9 2l13 1-1 4L6 17l-3 2z" fill="#b4dde4"/><path d="M2 20l16 1 4-17 1 17-4 1z" fill="#5a646a"/></svg>
    <svg class="cur" viewBox="-12.500 -8 49 33" preserveAspectRatio="xMidYMin meet"><path d="M12 12L1.600 6A12 12 0 0 0 12 24z" fill="#2da04b"/><path d="M12 12L22.400 6A12 12 0 0 1 12 24z" fill="#fcc934"/><path d="M12 24l5.500-10L8 15z" fill="#fcc934"/><path d="M1.600 6a12 12 0 0 1 20.800 0L12 8z" fill="#e33b2e"/><path d="M1.600 6l5.500 9 5-3-1-6z" fill="#e33b2e"/><path d="M1.600 6l5.200 9L12 24A12 12 0 0 1 1.600 6z" fill="#2da04b"/><circle cx="12" cy="12" r="5.800" fill="#fff"/><circle cx="12" cy="12" r="4.500" fill="#2f74e6"/></svg>
    <svg viewBox="0 0 24 24"><path d="M1 4h8l2 2h11v14H1z" fill="#f1b739"/><path d="M1 8h22v12H1z" fill="#fcdc81"/><path d="M5 21v-8h14v8h-4v-4H9v4z" fill="#3b8ed0"/></svg>
    <svg viewBox="0 0 24 24"><circle cx="12" cy="12" r="12" fill="#46b583"/><g fill="none" stroke="#dcf5e8" stroke-width="1"><ellipse cx="12" cy="12" rx="3" ry="8.500" transform="rotate(-15 12 12)"/><ellipse cx="12" cy="12" rx="3" ry="8.500" transform="rotate(45 12 12)"/><ellipse cx="12" cy="12" rx="3" ry="8.500" transform="rotate(-75 12 12)"/></g><circle cx="12" cy="12" r="1.200" fill="#fff"/></svg>
    <svg viewBox="0 0 24 24"><path d="M2.500 1.500h13l4 4V23h-17z" fill="#fafafa" stroke="#6b6b6b"/><path d="M3 14l16-2v10.500H3z" fill="#70c52f"/><path d="M6 7v6M6 7.500h2.500v5.500M10 10.500h2.500M13.500 10.500h2.500" stroke="#333" fill="none"/><path d="M21.500 1l2 1-8 16-2 1v-3z" fill="#efaf2c" stroke="#8b5e1a" stroke-width=".5"/></svg>
    <svg viewBox="0 0 24 24"><path d="M17 0l7 3v18l-7 3z" fill="#28a4f0"/><path d="M17 0v6L3 17.500.5 15.500V14zM17 24v-6L3 6.500.5 8.500V10z" fill="#0a72bd"/></svg>
    <svg viewBox="0 0 24 24"><path d="M1 3h22v18H1z" fill="#080808" stroke="#777"/><path d="M1 3h22v2.500H1z" fill="#ccc"/><text class="cmd" x="3" y="11.500">C:\_</text></svg>
  </div>
  <svg class="people" width="20" height="20" viewBox="0 0 20 20" fill="none" stroke="#000" stroke-width="1.200"><circle cx="12.500" cy="5" r="3"/><circle cx="7" cy="10.500" r="2.700"/><path d="M2.500 17c.5-5 8.500-5 9 0M9.500 8.500c4-1.500 7.500.5 7.500 4"/></svg>
  <div class="tray">
    <svg class="wx" width="24" height="24" viewBox="0 0 24 24"><circle cx="11.500" cy="11.500" r="9.800" fill="#f4991f"/><path d="M6 23a4.500 4.500 0 0 1 0-8 6 6 0 0 1 11-1 4.500 4.500 0 1 1 2 9z" fill="#c6dafa"/></svg>
    <span class="temp">23°C</span><span class="cond">Partly sunny</span>
    <svg class="glyphs" width="140" height="24" viewBox="1066 736 140 24" fill="none" stroke="#000" stroke-width="1.200">
      <path d="M1069.500 751l5.500-5.500 5.500 5.500"/>
      <rect x="1094.500" y="743.500" width="7" height="9" rx="1.500"/><path d="M1101.500 746.500l3-2v7l-3-2M1095 740.500q4-1.500 8 0M1095 755.500q4 1.500 8 0"/>
      <path d="M1119.500 744.500h9.500v7h-9.500zM1129.500 746.500h1.500v3h-1.500"/><path d="M1121 746h7v4h-7z" fill="#000"/><path d="M1115 743.500h4v3q-2 3-4 0zM1116 741v2M1118 741v2M1117 748v3h2" stroke-width="1"/>
      <path d="M1143 753.500a3.800 3.800 0 0 1 0-7.500 5.500 5.500 0 0 1 9.500-.5 4 4 0 0 1 .5 8z" fill="#9c9c9c"/><path d="M1139.500 741.500l15 13"/>
      <path d="M1163 746h2.500l3.500-3.500v11l-3.500-3.500h-2.500zM1171 745.500q2 2.500 0 5M1173.500 743.500q3.500 4.500 0 9"/><path d="M1176 741.500q5 6.500 0 13" stroke="#999"/>
      <path d="M1193 753.500a9 9 0 0 1 9-6.500M1196 754.500a6 6 0 0 1 6-4.500M1191 751.500a12 12 0 0 1 11-7.500"/><path d="M1190 748.500q4-6.500 12-7.500" stroke="#999"/><circle cx="1200.500" cy="753.500" r="1" fill="#000"/>
    </svg>
    <span class="lang">ENG</span>
    <div class="clock"><span class="ck1">01:47 PM</span><span class="ck2">18-03-2023</span></div>
    <svg class="note" width="30" height="24" viewBox="0 0 30 24"><path d="M2 1.500h16v12H8l-3 3.500v-3.500H2z"/><path d="M4.500 5h11M4.500 8h11" stroke="#eee" stroke-width="1.100"/><rect x="7" y="8" width="20" height="14" rx="7" fill="#c9c9c9" stroke="#8a8a8a"/><text class="nn" x="17" y="19" text-anchor="middle">27</text></svg>
  </div>
</footer>
</body>
</html>
```

FILE: styles.css
```css
* { box-sizing: border-box; }
body { margin: 0; width: 1364px; height: 761px; overflow: hidden; display: flex; flex-direction: column; background: #fff; font-family: "Noto Sans", "Open Sans", sans-serif; color: #212529; }
svg { flex: none; display: block; }
.defs { position: absolute; }
.i16 { width: 16px; height: 16px; }

.tabstrip { height: 34px; background: #3a3a3a; display: flex; flex: none; padding-left: 9px; }
.tab { width: 181.300px; height: 34px; flex: none; display: flex; align-items: center; padding: 0 7px 0 11px; color: #dedede; font-size: 11.700px; letter-spacing: -.2px; position: relative; }
.tab:not(.active):not(.last)::after { content: ""; position: absolute; right: 0; top: 8px; width: 1px; height: 19px; background: #777; }
.fav { width: 16px; height: 16px; margin-right: 8px; }
.tab-title { flex: 1; white-space: nowrap; overflow: hidden; line-height: 18px; margin-top: -1px; }
.fade { -webkit-mask-image: linear-gradient(90deg, #000 84%, transparent 101%); mask-image: linear-gradient(90deg, #000 84%, transparent 101%); }
.tab-x { width: 16px; height: 16px; margin-left: 5px; }
.active { background: #fff; color: #45484c; border-radius: 8px 8px 0 0; padding-left: 12px; padding-right: 8px; }
.active::before, .active::after { content: ""; position: absolute; bottom: 0; width: 8px; height: 8px; }
.active::before { left: -8px; background: radial-gradient(circle at 0 0, transparent 7.500px, #fff 8px); }
.active::after { right: -8px; background: radial-gradient(circle at 100% 0, transparent 7.500px, #fff 8px); }
.globe-dim { color: #686868; --cut: #3a3a3a; }
.globe-on { color: #54575b; --cut: #fff; }
.plus { width: 14px; height: 14px; margin: 10px 0 0 15px; }
.winctl { margin-left: auto; margin-right: 5px; }
.wa { font: 700 9.500px Roboto, sans-serif; fill: #fff; letter-spacing: 0; }

.toolbar { height: 36px; flex: none; display: flex; align-items: center; padding: 0 4px 0 14px; }
.navbtns { display: flex; gap: 16px; width: 94px; }
.navbtns svg { width: 16px; height: 16px; }
.omnibox { width: 765px; height: 28px; border-radius: 14px; background: #f1f3f4; display: flex; align-items: center; padding: 0 9px 0 10px; }
.url { flex: 1; margin-left: 8px; font-size: 13.500px; line-height: 20px; color: #6b6f73; letter-spacing: -.2px; }
.url b { font-weight: 400; color: #202124; }
.star-btn { margin-left: 16px; }
.exts { margin-left: auto; display: flex; align-items: center; }
.exts svg { width: 16px; height: 16px; margin: 0 8px; }
.exts .avatar { width: 22px; height: 22px; margin: 0 5px; }
.abp { font: 700 7px "Liberation Sans", sans-serif; fill: #fff; }
.e { font: 500 10.500px Roboto, sans-serif; fill: #fff; }
.sc { font: 400 11px "Open Sans", sans-serif; fill: #fff; }

.bookmarks { height: 33px; flex: none; border-bottom: 1px solid #d0d2d5; display: flex; align-items: center; padding: 0 9px 4px 14px; font-size: 11.500px; letter-spacing: -.1px; color: #3c4043; }
.bm { display: flex; align-items: center; gap: 8px; white-space: nowrap; }
.bm span { margin-top: -1px; }
.b1 { width: 79px; } .b2 { width: 86px; } .b3 { width: 118px; } .b4 { width: 67px; } .b5 { width: 76px; }
.other { margin-left: auto; border-left: 1px solid #c8cacd; height: 16px; padding-left: 10px; letter-spacing: -.2px; }

.viewport { height: 625px; flex: none; display: flex; overflow: hidden; }
.page { width: 1349px; }
.navbar { height: 56px; background: #343a40; display: flex; align-items: center; padding-left: 16px; gap: 16px; font-size: 15.200px; letter-spacing: -.15px; color: rgba(255,255,255,.5); }
.navbar .on { color: #fff; }
.brand { color: #fff; font-size: 19px; letter-spacing: .1px; margin-right: 8px; }
.welcome { margin: 0 0 8px; height: 67px; font-size: 55px; line-height: 70px; font-weight: 300; text-align: center; letter-spacing: -.9px; }
.row { display: flex; height: 450px; }
.col { width: 675px; padding: 0 15px; font-size: 15.200px; letter-spacing: -.15px; margin: 0; }
.col label { display: block; line-height: 24px; margin-bottom: 8px; }
.control { height: 38px; border: 1px solid #ced4da; border-radius: 4px; padding: 0 12px; line-height: 37px; color: #6c757d; }
.actions { display: flex; justify-content: center; gap: 5px; padding-right: 1px; }
.btn { height: 38px; border: 0; border-radius: 4px; color: #fff; font: 15.200px "Noto Sans", "Open Sans", sans-serif; padding: 0; }
.ok { width: 76px; background: #28a745; } .no { width: 61px; background: #dc3545; }
.branches { display: flex; padding-top: 7px; }
.branches h2 { flex: 1; margin: 0; text-align: center; font-size: 38px; line-height: 48px; font-weight: 600; letter-spacing: -.7px; }

.map { position: relative; width: 600px; height: 450px; margin-left: 15px; overflow: hidden; font-family: Roboto, sans-serif; }
.lbl { font-family: Roboto, "Noto Sans Telugu", sans-serif; paint-order: stroke; stroke: #fff; stroke-width: 2px; stroke-linejoin: round; stroke-opacity: .8; }
.area { font-size: 9.800px; font-weight: 500; fill: #5a5e63; }
.te { font-size: 10.500px; font-weight: 600; fill: #4a4e53; }
.town { font-size: 13px; font-weight: 500; fill: #4c5055; }
.tt { font-size: 13px; font-weight: 600; }
.road { font-size: 10px; fill: #6a6e73; }
.dark { fill: #45494d; }
.poi { font-size: 14px; }
.small, .poi .small { font-size: 10.500px; font-weight: 400; }
.under { opacity: .5; }
.green { fill: #188038; font-weight: 500; } .orange { fill: #d9740f; } .pink { fill: #d8307a; } .blue { fill: #3b78dc; }
.slate { fill: #57727f; font-weight: 500; } .teal { fill: #10868e; font-weight: 500; } .red { fill: #d4403c; } .dark-red { fill: #b31412; }
.hwno { font: 500 9px Roboto, sans-serif; fill: #333; }
.glogo { font: 500 15.500px Roboto, sans-serif; paint-order: stroke; stroke: #fff; stroke-width: 1.500px; }
.card { position: absolute; left: 10px; top: 10px; width: 302px; height: 145px; background: #fff; border-radius: 2px; box-shadow: 0 1px 4px rgba(0,0,0,.3); padding: 10px 12px; display: flex; font-size: 12px; color: #5b5b5b; }
.card a { color: #1a73e8; }
.card-main { width: 205px; }
.card h2 { margin: 0 0 7px; font-size: 14px; line-height: 16px; font-weight: 500; color: #000; }
.card p { margin: 0; line-height: 14px; white-space: nowrap; }
.rating { display: flex; align-items: center; height: 16px; margin: 6px 0 9px; }
.rating span { font-size: 14px; margin-right: 3px; } .rating a { margin-left: 11px; }
.larger { display: block; line-height: 16px; }
.dir { width: 78px; margin-left: 4px; padding-top: 1px; flex: none; display: flex; flex-direction: column; align-items: center; line-height: 22px; }
.zoomctl { position: absolute; left: 550px; top: 345px; background: #fff; border-radius: 2px; box-shadow: 0 1px 4px rgba(0,0,0,.3); }
.attrib { position: absolute; right: 0; bottom: 0; height: 14px; width: 385px; padding-left: 5px; background: rgba(245,245,245,.7); display: flex; line-height: 14px; font-size: 10px; color: #222; white-space: nowrap; }
.a1 { width: 98px; } .a2 { width: 121px; } .a3 { width: 72px; }
.scrollbar { width: 15px; background: #f1f1f1; display: flex; flex-direction: column; }
.thumb { height: 527px; margin-left: 2px; background: #c1c1c1; }
.scrollbar svg:last-child { margin-top: auto; }

.taskbar { height: 33px; flex: none; background: #eee; display: flex; align-items: flex-start; color: #111; }
.sys, .apps { display: flex; flex: none; }
.sys svg { width: 24px; height: 24px; margin: 8px 12px 0; }
.apps { margin-left: 2px; }
.apps svg { width: 24px; height: 24px; margin: 8px 12.500px 0; }
.apps .cur { width: 49px; height: 33px; margin: 0; background: #f9f9f9; }
.people { margin: 10px 0 0 185px; }
.tray { margin-left: 60px; display: flex; align-items: flex-start; flex: none; white-space: nowrap; line-height: 39px; font-size: 13.300px; letter-spacing: -.1px; }
.wx { margin: 8px 7px 0 0; }
.temp { width: 38px; } .cond { width: 96px; }
.glyphs { margin-top: 8px; }
.lang { width: 40px; padding-left: 7px; font-size: 11.500px; }
.clock { width: 60px; margin-left: 2px; display: flex; flex-direction: column; text-align: center; line-height: 18px; padding-top: 1px; font-size: 11.300px; }
.note { margin: 10px 0 0 15px; }
.pl { font: 700 6px "Liberation Sans", sans-serif; letter-spacing: 0; }
.cmd { font: 700 5.500px "Liberation Mono", monospace; fill: #fff; }
.nn { font: 600 10.500px "Open Sans", sans-serif; }
```
